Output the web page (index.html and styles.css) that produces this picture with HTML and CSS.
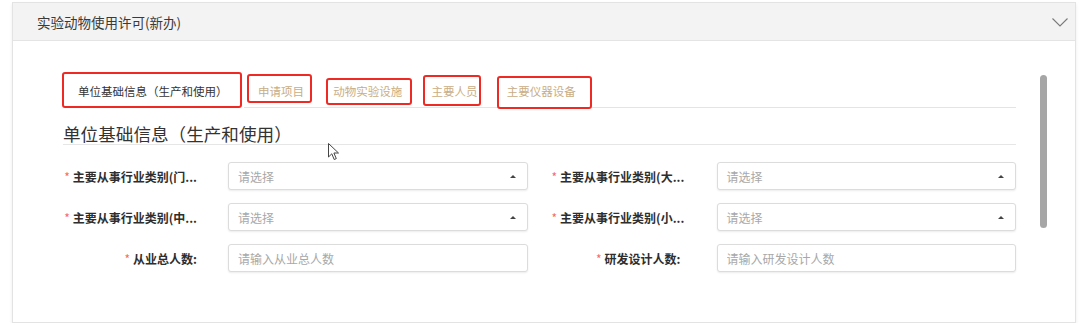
FILE: index.html
```html
<!DOCTYPE html>
<html lang="zh-CN">
<head>
    <meta charset="UTF-8">
    <title>实验动物使用许可(新办)</title>
    <link rel="stylesheet" href="styles.css">
</head>
<body>

    <div class="panel">
        <div class="panel-header">
            <span class="panel-title">实验动物使用许可(新办)</span>
            <svg class="chevron" width="16" height="9" viewBox="0 0 16 9">
                <polyline points="0.5,0.5 8,8 15.5,0.5" fill="none" stroke="#7a7a7a" stroke-width="1.1"/>
            </svg>
        </div>

        <div class="panel-body">
            <div class="content">
                <!-- tabs, red boxes are review marks -->
                <div class="tabs">
                    <div class="tab active"><span class="mark m1">单位基础信息（生产和使用）</span></div>
                    <div class="tab"><span class="mark m2">申请项目</span></div>
                    <div class="tab"><span class="mark m3">动物实验设施</span></div>
                    <div class="tab"><span class="mark m4">主要人员</span></div>
                    <div class="tab"><span class="mark m5">主要仪器设备</span></div>
                </div>

                <h2 class="section-title">单位基础信息（生产和使用）</h2>

                <div class="form-grid">
                    <div class="form-item">
                        <label class="form-label"><i>*</i>主要从事行业类别(门...</label>
                        <div class="select"><span class="placeholder">请选择</span><span class="caret"></span></div>
                    </div>
                    <div class="form-item right">
                        <label class="form-label"><i>*</i>主要从事行业类别(大...</label>
                        <div class="select"><span class="placeholder">请选择</span><span class="caret"></span></div>
                    </div>
                    <div class="form-item">
                        <label class="form-label"><i>*</i>主要从事行业类别(中...</label>
                        <div class="select"><span class="placeholder">请选择</span><span class="caret"></span></div>
                    </div>
                    <div class="form-item right">
                        <label class="form-label"><i>*</i>主要从事行业类别(小...</label>
                        <div class="select"><span class="placeholder">请选择</span><span class="caret"></span></div>
                    </div>
                    <div class="form-item">
                        <label class="form-label"><i>*</i>从业总人数:</label>
                        <input type="text" class="input" placeholder="请输入从业总人数">
                    </div>
                    <div class="form-item right">
                        <label class="form-label"><i>*</i>研发设计人数:</label>
                        <input type="text" class="input" placeholder="请输入研发设计人数">
                    </div>
                </div>
            </div>

            <div class="scrollbar"></div>
        </div>

        <!-- mouse pointer captured in the shot -->
        <svg class="cursor" width="12" height="18" viewBox="0 0 12 18">
            <path d="M0.5 0.5 L0.5 14 L3.8 10.8 L6.2 16.5 L8.3 15.6 L5.9 10 L10.5 10 Z" fill="#fff" stroke="#444" stroke-width="1" stroke-linejoin="round"/>
        </svg>
    </div>

</body>
</html>
```

FILE: styles.css
```css
body {
    margin: 0;
    padding: 2px 4px 0 12px;
    background-color: #fff;
    font-family: "Noto Sans CJK SC", "Noto Sans", sans-serif;
    color: #333;
}
.panel {
    position: relative;
    height: 321px;
    box-sizing: border-box;
    border: 1px solid #e3e3e3;
    box-shadow: 0 2px 3px rgba(0, 0, 0, 0.08);
    background-color: #fff;
}
.panel-header {
    height: 37px;
    display: flex;
    align-items: center;
    justify-content: space-between;
    padding: 0 7px 0 24px;
    background-color: #f3f3f3;
    border-bottom: 1px solid #e4e4e4;
}
.panel-title {
    font-size: 13.5px;
    color: #3a3a3a;
}
.chevron {
    margin-top: 1px;
}
.panel-body {
    display: flex;
    padding: 33px 28px 0 49px;
}
.content {
    flex: 1;
}
.scrollbar {
    width: 7px;
    height: 153px;
    margin: 1px 0 0 24px;
    background-color: #a6a6a6;
    border-radius: 4px;
}

/* tabs */
.tabs {
    display: flex;
    height: 33px;
    border-bottom: 1px solid #e4e4e4;
}
.tab {
    display: flex;
    align-items: center;
    padding: 0 14.6px;
    font-size: 11.5px;
    line-height: 16px;
    color: #c9ad85;
}
.tab.active {
    padding: 0 16px;
    color: #333;
    background-color: #fff;
    margin-bottom: -1px;
}
.mark {
    position: relative;
}
.mark::after {
    content: "";
    position: absolute;
    border: 2px solid #ee2a24;
    border-radius: 3px;
}
.m1::after { left: -16px; right: -14px; top: -11px; bottom: -9px; }
.m2::after { left: -11px; right: -8px; top: -9px; bottom: -4px; }
.m3::after { left: -7px; right: -10px; top: -5px; bottom: -6px; }
.m4::after { left: -8px; right: -4px; top: -8px; bottom: -7px; }
.m5::after { left: -10px; right: -16px; top: -7px; bottom: -10px; }

.section-title {
    margin: 16px 0 0 1px;
    font-size: 17.6px;
    font-weight: normal;
    line-height: 20px;
    color: #333;
    border-bottom: 1px solid #e6e6e6;
}

/* form */
.form-grid {
    display: grid;
    grid-template-columns: 1fr 1fr;
    column-gap: 24px;
    row-gap: 13px;
    margin-top: 17px;
    padding-left: 1px;
}
.form-item {
    display: flex;
    align-items: center;
}
.form-label {
    width: 165px;
    flex: none;
    box-sizing: border-box;
    padding-right: 31px;
    text-align: right;
    font-size: 12px;
    font-weight: bold;
    color: #2e2e2e;
    white-space: nowrap;
}
.form-item.right .form-label {
    padding-right: 36px;
}
.form-label i {
    font-style: normal;
    font-weight: normal;
    color: #f56c6c;
    margin-right: 3px;
}
.select,
.input {
    flex: 1;
    height: 28px;
    box-sizing: border-box;
    border: 1px solid #dcdcdc;
    border-radius: 3px;
    box-shadow: 0 1px 2px rgba(0, 0, 0, 0.08);
    background-color: #fff;
    font-family: inherit;
    font-size: 12px;
}
.select {
    display: flex;
    align-items: center;
    justify-content: space-between;
    padding: 0 11px 0 9px;
}
.input {
    padding: 0 9px;
    outline: none;
}
.placeholder,
.input::placeholder {
    color: #a8a8a8;
}
.caret {
    width: 0;
    height: 0;
    border-left: 3px solid transparent;
    border-right: 3px solid transparent;
    border-bottom: 3px solid #444;
}
.cursor {
    position: absolute;
    left: 315px;
    top: 140px;
}
```
